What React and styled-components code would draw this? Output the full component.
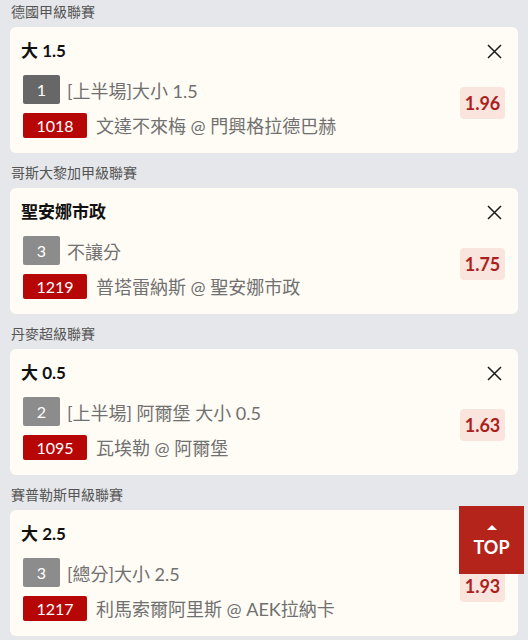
import React from "react";
import styled, { createGlobalStyle } from "styled-components";

const Global = createGlobalStyle`
  html, body {
    margin: 0;
    padding: 0;
    background: #e5e7ea;
    overflow: hidden;
  }
  body {
    font-family: Lato, "Noto Sans CJK TC", "Noto Sans", sans-serif;
    -webkit-font-smoothing: antialiased;
  }
`;

const Page = styled.div`
  width: 528px;
  min-height: 640px;
  box-sizing: border-box;
  padding: 0 10px;
  display: flex;
  flex-direction: column;
  gap: 8px;
`;

const Section = styled.section`
  display: flex;
  flex-direction: column;
`;

const League = styled.div`
  padding-top: 2px;
  height: 20px;
  line-height: 20px;
  margin-bottom: 5px;
  font-size: 14px;
  color: #555;
  padding-left: 1px;
`;

const Card = styled.div`
  background: #fffcf5;
  border-radius: 6px;
  padding: 12px 13px 16px 11px;
  display: flex;
  flex-direction: column;
  height: 126px;
  box-sizing: border-box;
`;

const TitleRow = styled.div`
  display: flex;
  align-items: center;
  justify-content: space-between;
  height: 24px;
  margin-bottom: 12px;
`;

const Title = styled.div`
  font-size: 17px;
  font-weight: 700;
  color: #111;
  line-height: 24px;
`;

const Close = styled.button`
  border: 0;
  background: none;
  padding: 0;
  margin-right: 3px;
  width: 15px;
  height: 15px;
  display: flex;
  cursor: pointer;
`;

const Body = styled.div`
  display: flex;
  align-items: center;
  justify-content: space-between;
`;

const Lines = styled.div`
  display: flex;
  flex-direction: column;
  gap: 8px;
  padding-left: 2px;
`;

const Line = styled.div`
  display: flex;
  align-items: center;
  gap: ${(p) => p.$gap}px;
  font-size: 18px;
  color: #707070;
  white-space: nowrap;
`;

const Badge = styled.span`
  display: inline-flex;
  align-items: center;
  justify-content: center;
  width: ${(p) => p.$w}px;
  height: ${(p) => p.$h}px;
  border-radius: 2px;
  background: ${(p) => p.$bg};
  color: #fff;
  font-size: 16px;
  font-family: Lato, sans-serif;
`;

const Odds = styled.div`
  margin-bottom: 8px;
  width: 45px;
  height: 32px;
  border-radius: 4px;
  background: #f9e5dd;
  color: #ab1f1f;
  font-weight: 700;
  font-size: 18px;
  display: flex;
  align-items: center;
  justify-content: center;
`;

const TopButton = styled.button`
  position: fixed;
  left: 459px;
  top: 506px;
  width: 65px;
  height: 68px;
  border: 0;
  padding: 0;
  background: #b5241b;
  color: #fff;
  font-family: Lato, sans-serif;
  font-weight: 700;
  font-size: 18px;
  display: flex;
  flex-direction: column;
  align-items: center;
  justify-content: center;
  gap: 6px;
  cursor: pointer;
`;

const Arrow = styled.span`
  width: 0;
  height: 0;
  border-left: 5px solid transparent;
  border-right: 5px solid transparent;
  border-bottom: 5px solid #fff;
  margin-top: 2px;
`;

const bets = [
  { league: "德國甲級聯賽", title: "大 1.5", no: "1", dark: true, market: "[上半場]大小 1.5", code: "1018", match: "文達不來梅 @ 門興格拉德巴赫", odds: "1.96" },
  { league: "哥斯大黎加甲級聯賽", title: "聖安娜市政", no: "3", market: "不讓分", code: "1219", match: "普塔雷納斯 @ 聖安娜市政", odds: "1.75" },
  { league: "丹麥超級聯賽", title: "大 0.5", no: "2", market: "[上半場] 阿爾堡 大小 0.5", code: "1095", match: "瓦埃勒 @ 阿爾堡", odds: "1.63" },
  { league: "賽普勒斯甲級聯賽", title: "大 2.5", no: "3", market: "[總分]大小 2.5", code: "1217", match: "利馬索爾阿里斯 @ AEK拉納卡", odds: "1.93" },
];

const XIcon = () => (
  <svg width="15" height="15" viewBox="0 0 15 15">
    <path d="M1 1 L14 14 M14 1 L1 14" stroke="#1a1a1a" strokeWidth="1.5" fill="none" />
  </svg>
);

export default function App() {
  return (
    <>
      <Global />
      <Page>
        {bets.map((b, i) => (
          <Section key={i}>
            <League>{b.league}</League>
            <Card>
              <TitleRow>
                <Title>{b.title}</Title>
                <Close aria-label="close"><XIcon /></Close>
              </TitleRow>
              <Body>
                <Lines>
                  <Line $gap={7}>
                    <Badge $w={37} $h={29} $bg={b.dark ? "#676767" : "#8c8c8c"}>{b.no}</Badge>
                    <span>{b.market}</span>
                  </Line>
                  <Line $gap={9}>
                    <Badge $w={64} $h={25} $bg="#b70606">{b.code}</Badge>
                    <span>{b.match}</span>
                  </Line>
                </Lines>
                <Odds>{b.odds}</Odds>
              </Body>
            </Card>
          </Section>
        ))}
      </Page>
      <TopButton>
        <Arrow />
        TOP
      </TopButton>
    </>
  );
}
